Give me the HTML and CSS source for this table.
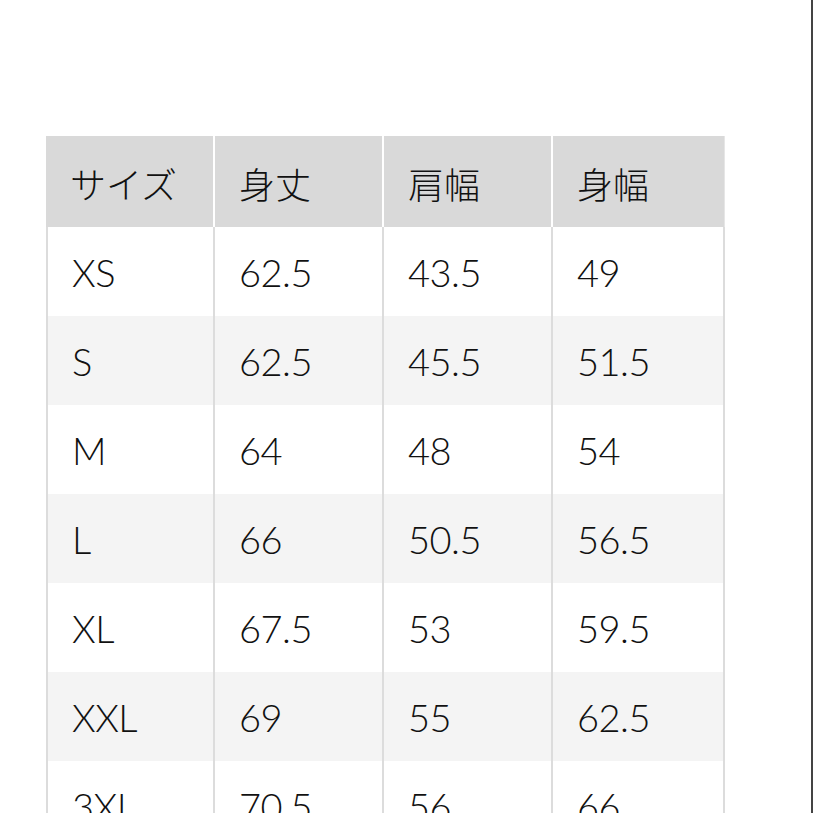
FILE: index.html
```html
<!DOCTYPE html>
<html lang="ja">
<head>
<meta charset="utf-8">
<title>サイズ表</title>
<link rel="stylesheet" href="styles.css">
</head>
<body>
<main class="page">
  <table class="size-table">
    <colgroup>
      <col class="c1"><col class="c2"><col class="c3"><col class="c4">
    </colgroup>
    <thead>
      <tr><th>サイズ</th><th>身丈</th><th>肩幅</th><th>身幅</th></tr>
    </thead>
    <tbody>
      <tr><td>XS</td><td>62.5</td><td>43.5</td><td>49</td></tr>
      <tr><td>S</td><td>62.5</td><td>45.5</td><td>51.5</td></tr>
      <tr><td>M</td><td>64</td><td>48</td><td>54</td></tr>
      <tr><td>L</td><td>66</td><td>50.5</td><td>56.5</td></tr>
      <tr><td>XL</td><td>67.5</td><td>53</td><td>59.5</td></tr>
      <tr><td>XXL</td><td>69</td><td>55</td><td>62.5</td></tr>
      <tr><td>3XL</td><td>70.5</td><td>56</td><td>66</td></tr>
    </tbody>
  </table>
</main>
</body>
</html>
```

FILE: styles.css
```css
html {
  overflow: hidden;
  background: #fff;
}
body {
  margin: 0;
  font-family: "Lato", "Noto Sans CJK JP", sans-serif;
  color: #111;
}
body::after {
  content: "";
  position: fixed;
  top: 0;
  right: 0;
  bottom: 0;
  width: 2px;
  background: #444;
}
.page {
  padding: 136px 0 0 46px;
}
.size-table {
  table-layout: fixed;
  width: 679px;
  border-collapse: separate;
  border-spacing: 0;
}
.c1, .c2, .c3 { width: 169px; }
.c4 { width: 172px; }

.size-table th,
.size-table td {
  text-align: left;
  padding: 0 0 0 24px;
  font-size: 38px;
  font-weight: 300;
  letter-spacing: -0.5px;
  box-sizing: border-box;
}
.size-table th {
  height: 91px;
  background: #d9d9d9;
  border-right: 2px solid #fff;
  font-family: "Noto Sans CJK JP", sans-serif;
  font-size: 36px;
  font-weight: 300;
  letter-spacing: 0;
  padding-top: 2px;
}
.size-table th:last-child {
  border-right: 1px solid #e6e6e6;
}
.size-table td {
  height: 89px;
  border-right: 2px solid #dcdcdc;
}
.size-table td:first-child {
  border-left: 2px solid #dcdcdc;
}
.size-table tbody tr:nth-child(even) td {
  background: #f4f4f4;
}
```
